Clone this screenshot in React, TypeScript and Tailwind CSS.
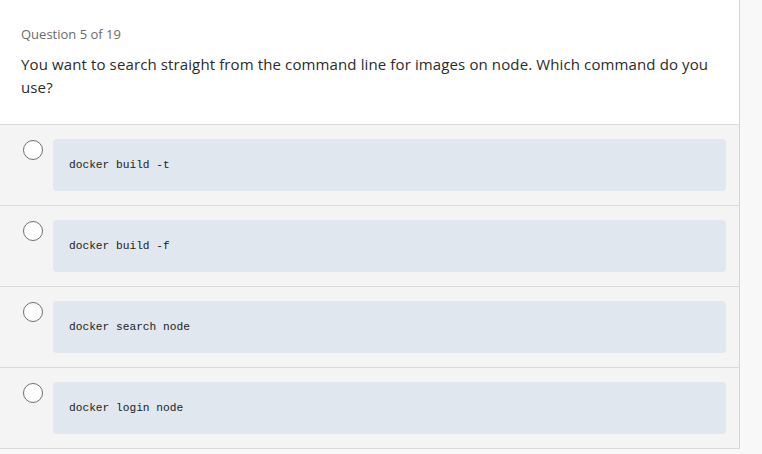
import React from 'react';

const options = ['docker build -t', 'docker build -f', 'docker search node', 'docker login node'];

const App: React.FC = () => {
    return (
        <div className="h-[454px] w-[762px] bg-[#f8f8f8] overflow-hidden">
            <div className="w-[740px] border-r border-[#d6d6d6] font-['Open_Sans',sans-serif]">
                <div className="bg-white px-[21px] pt-[25px] pb-[25px] border-b border-[#d9d9d9]">
                    <div className="text-[13px] leading-[18px] text-[#6b6b6b]">Question 5 of 19</div>
                    <p className="mt-[10px] text-[15px] leading-[23px] text-[#2b2b2b] tracking-[0.12px]">
                        You want to search straight from the command line for images on node. Which command do you use?
                    </p>
                </div>
                {options.map((opt) => (
                    <div key={opt} className="flex bg-[#f4f4f4] pl-[23px] pr-[13px] pt-[14px] pb-[14px] border-b border-[#d9d9d9]">
                        <span className="mt-[1px] h-[20px] w-[20px] shrink-0 rounded-full border-[1.5px] border-[#6f6f6f] bg-white" />
                        <div className="ml-[10px] flex h-[52px] flex-1 items-center rounded-[4px] bg-[#e1e7ee] px-4">
                            <code className="font-['Liberation_Mono',monospace] text-[11.2px] text-[#222]">{opt}</code>
                        </div>
                    </div>
                ))}
            </div>
        </div>
    );
};

export default App;
